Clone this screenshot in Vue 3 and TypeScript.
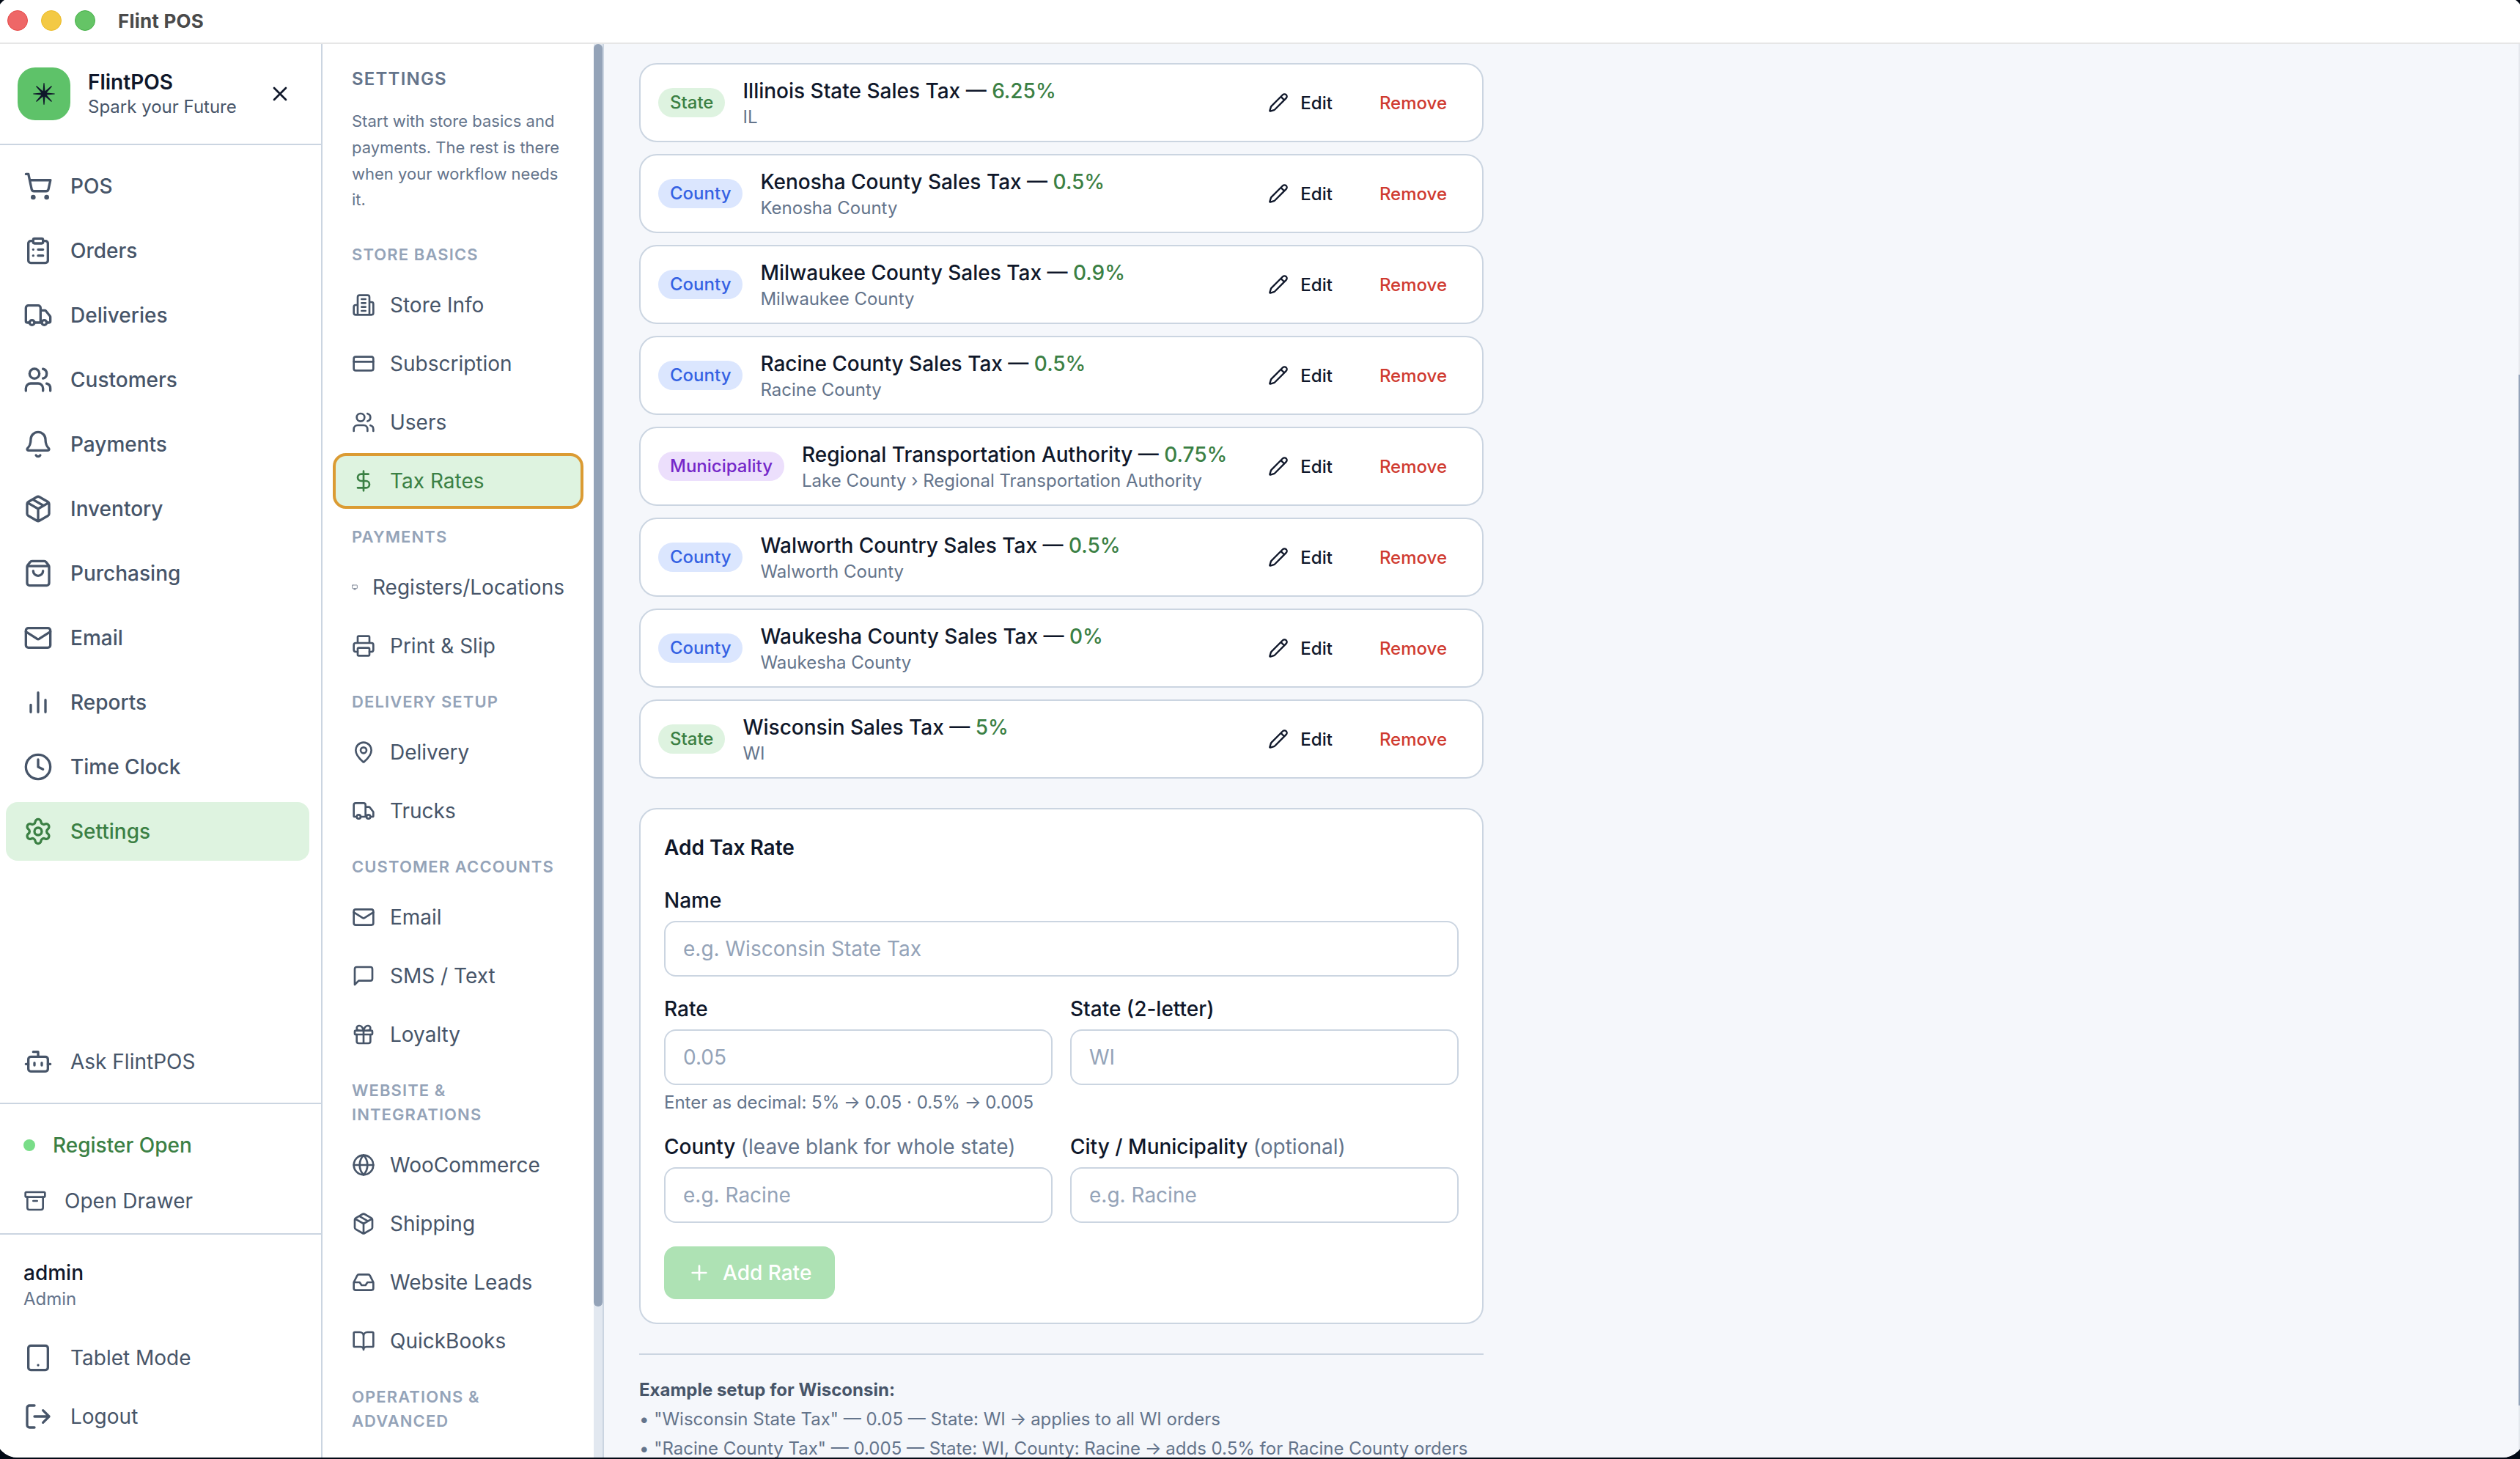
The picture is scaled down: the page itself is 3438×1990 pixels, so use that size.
<script setup lang="ts">
interface NavItem {
  label: string
  icon: string
  active?: boolean
  small?: boolean
}

interface NavGroup {
  title: string
  items: NavItem[]
}

interface TaxRate {
  level: 'State' | 'County' | 'Municipality'
  name: string
  rate: string
  region: string
}

const icons: Record<string, string> = {
  cart: '<circle cx="8" cy="21" r="1"/><circle cx="19" cy="21" r="1"/><path d="M2.05 2.05h2l2.66 12.42a2 2 0 0 0 2 1.58h9.78a2 2 0 0 0 1.95-1.57l1.65-7.43H5.12"/>',
  clipboard: '<rect width="8" height="4" x="8" y="2" rx="1"/><path d="M16 4h2a2 2 0 0 1 2 2v14a2 2 0 0 1-2 2H6a2 2 0 0 1-2-2V6a2 2 0 0 1 2-2h2M12 11h4M12 16h4M8 11h.01M8 16h.01"/>',
  truck: '<path d="M14 18V6a2 2 0 0 0-2-2H4a2 2 0 0 0-2 2v11a1 1 0 0 0 1 1h2M15 18H9M19 18h2a1 1 0 0 0 1-1v-3.65a1 1 0 0 0-.22-.624l-3.48-4.35A1 1 0 0 0 17.52 8H14"/><circle cx="17" cy="18" r="2"/><circle cx="7" cy="18" r="2"/>',
  users: '<path d="M16 21v-2a4 4 0 0 0-4-4H6a4 4 0 0 0-4 4v2M16 3.128a4 4 0 0 1 0 7.744M22 21v-2a4 4 0 0 0-3-3.87"/><circle cx="9" cy="7" r="4"/>',
  bell: '<path d="M10.268 21a2 2 0 0 0 3.464 0M3.262 15.326A1 1 0 0 0 4 17h16a1 1 0 0 0 .74-1.673C19.41 13.956 18 12.499 18 8A6 6 0 0 0 6 8c0 4.499-1.411 5.956-2.738 7.326"/>',
  package: '<path d="M11 21.73a2 2 0 0 0 2 0l7-4A2 2 0 0 0 21 16V8a2 2 0 0 0-1-1.73l-7-4a2 2 0 0 0-2 0l-7 4A2 2 0 0 0 3 8v8a2 2 0 0 0 1 1.73zM12 22V12M3.29 7 12 12l8.71-5M7.5 4.27l9 5.15"/>',
  bag: '<path d="M16 10a4 4 0 0 1-8 0M3.103 6.034h17.794M3.4 5.467a2 2 0 0 0-.4 1.2V20a2 2 0 0 0 2 2h14a2 2 0 0 0 2-2V6.667a2 2 0 0 0-.4-1.2l-2-2.667A2 2 0 0 0 17 2H7a2 2 0 0 0-1.6.8z"/>',
  mail: '<rect width="20" height="16" x="2" y="4" rx="2"/><path d="m22 7-8.991 5.727a2 2 0 0 1-2.009 0L2 7"/>',
  chart: '<path d="M18 20V10M12 20V4M6 20v-6"/>',
  clock: '<circle cx="12" cy="12" r="10"/><path d="M12 6v6l4 2"/>',
  gear: '<path d="M9.671 4.136a2.34 2.34 0 0 1 4.659 0 2.34 2.34 0 0 0 3.319 1.915 2.34 2.34 0 0 1 2.33 4.033 2.34 2.34 0 0 0 0 3.831 2.34 2.34 0 0 1-2.33 4.033 2.34 2.34 0 0 0-3.319 1.915 2.34 2.34 0 0 1-4.659 0 2.34 2.34 0 0 0-3.32-1.915 2.34 2.34 0 0 1-2.33-4.033 2.34 2.34 0 0 0 0-3.831A2.34 2.34 0 0 1 6.35 6.051a2.34 2.34 0 0 0 3.319-1.915"/><circle cx="12" cy="12" r="3"/>',
  bot: '<path d="M12 8V4H8M2 14h2M20 14h2M15 13v2M9 13v2"/><rect width="16" height="12" x="4" y="8" rx="2"/>',
  archive: '<rect width="20" height="5" x="2" y="3" rx="1"/><path d="M4 8v11a2 2 0 0 0 2 2h12a2 2 0 0 0 2-2V8M10 12h4"/>',
  tablet: '<rect width="16" height="20" x="4" y="2" rx="2"/><path d="M12 18h.01"/>',
  logout: '<path d="m16 17 5-5-5-5M21 12H9M9 21H5a2 2 0 0 1-2-2V5a2 2 0 0 1 2-2h4"/>',
  building: '<path d="M6 22V4a2 2 0 0 1 2-2h8a2 2 0 0 1 2 2v18ZM6 12H4a2 2 0 0 0-2 2v6a2 2 0 0 0 2 2h2M18 9h2a2 2 0 0 1 2 2v9a2 2 0 0 1-2 2h-2M10 6h4M10 10h4M10 14h4M10 18h4"/>',
  card: '<rect width="20" height="14" x="2" y="5" rx="2"/><path d="M2 10h20"/>',
  dollar: '<path d="M12 2v20M17 5H9.5a3.5 3.5 0 0 0 0 7h5a3.5 3.5 0 0 1 0 7H6"/>',
  monitor: '<rect width="20" height="14" x="2" y="3" rx="2"/><path d="M8 21h8M12 17v4"/>',
  printer: '<path d="M6 18H4a2 2 0 0 1-2-2v-5a2 2 0 0 1 2-2h16a2 2 0 0 1 2 2v5a2 2 0 0 1-2 2h-2M6 9V3a1 1 0 0 1 1-1h10a1 1 0 0 1 1 1v6"/><rect width="12" height="8" x="6" y="14" rx="1"/>',
  pin: '<path d="M20 10c0 4.993-5.539 10.193-7.399 11.799a1 1 0 0 1-1.202 0C9.539 20.193 4 14.993 4 10a8 8 0 0 1 16 0"/><circle cx="12" cy="10" r="3"/>',
  message: '<path d="M21 15a2 2 0 0 1-2 2H7l-4 4V5a2 2 0 0 1 2-2h14a2 2 0 0 1 2 2z"/>',
  gift: '<rect width="18" height="4" x="3" y="8" rx="1"/><path d="M12 8v13M19 12v7a2 2 0 0 1-2 2H7a2 2 0 0 1-2-2v-7M7.5 8a2.5 2.5 0 0 1 0-5A4.8 8 0 0 1 12 8a4.8 8 0 0 1 4.5-5 2.5 2.5 0 0 1 0 5"/>',
  globe: '<circle cx="12" cy="12" r="10"/><path d="M12 2a14.5 14.5 0 0 0 0 20 14.5 14.5 0 0 0 0-20M2 12h20"/>',
  inbox: '<path d="M22 12h-6l-2 3h-4l-2-3H2M5.45 5.11 2 12v6a2 2 0 0 0 2 2h16a2 2 0 0 0 2-2v-6l-3.45-6.89A2 2 0 0 0 16.76 4H7.24a2 2 0 0 0-1.79 1.11z"/>',
  book: '<path d="M12 7v14M3 18a1 1 0 0 1-1-1V4a1 1 0 0 1 1-1h5a4 4 0 0 1 4 4 4 4 0 0 1 4-4h5a1 1 0 0 1 1 1v13a1 1 0 0 1-1 1h-6a3 3 0 0 0-3 3 3 3 0 0 0-3-3z"/>',
  pencil: '<path d="M21.174 6.812a1 1 0 0 0-3.986-3.987L3.842 16.174a2 2 0 0 0-.5.83l-1.321 4.352a.5.5 0 0 0 .623.622l4.353-1.32a2 2 0 0 0 .83-.497zM15 5l4 4"/>',
  close: '<path d="M18 6 6 18M6 6l12 12"/>',
  plus: '<path d="M5 12h14M12 5v14"/>',
}

const mainNav: NavItem[] = [
  { label: 'POS', icon: 'cart' },
  { label: 'Orders', icon: 'clipboard' },
  { label: 'Deliveries', icon: 'truck' },
  { label: 'Customers', icon: 'users' },
  { label: 'Payments', icon: 'bell' },
  { label: 'Inventory', icon: 'package' },
  { label: 'Purchasing', icon: 'bag' },
  { label: 'Email', icon: 'mail' },
  { label: 'Reports', icon: 'chart' },
  { label: 'Time Clock', icon: 'clock' },
  { label: 'Settings', icon: 'gear', active: true },
]

const settingsGroups: NavGroup[] = [
  {
    title: 'Store Basics',
    items: [
      { label: 'Store Info', icon: 'building' },
      { label: 'Subscription', icon: 'card' },
      { label: 'Users', icon: 'users' },
      { label: 'Tax Rates', icon: 'dollar', active: true },
    ],
  },
  {
    title: 'Payments',
    items: [
      { label: 'Registers/Locations', icon: 'monitor', small: true },
      { label: 'Print & Slip', icon: 'printer' },
    ],
  },
  {
    title: 'Delivery Setup',
    items: [
      { label: 'Delivery', icon: 'pin' },
      { label: 'Trucks', icon: 'truck' },
    ],
  },
  {
    title: 'Customer Accounts',
    items: [
      { label: 'Email', icon: 'mail' },
      { label: 'SMS / Text', icon: 'message' },
      { label: 'Loyalty', icon: 'gift' },
    ],
  },
  {
    title: 'Website & Integrations',
    items: [
      { label: 'WooCommerce', icon: 'globe' },
      { label: 'Shipping', icon: 'package' },
      { label: 'Website Leads', icon: 'inbox' },
      { label: 'QuickBooks', icon: 'book' },
    ],
  },
  { title: 'Operations & Advanced', items: [] },
]

const taxRates: TaxRate[] = [
  { level: 'State', name: 'Illinois State Sales Tax', rate: '6.25%', region: 'IL' },
  { level: 'County', name: 'Kenosha County Sales Tax', rate: '0.5%', region: 'Kenosha County' },
  { level: 'County', name: 'Milwaukee County Sales Tax', rate: '0.9%', region: 'Milwaukee County' },
  { level: 'County', name: 'Racine County Sales Tax', rate: '0.5%', region: 'Racine County' },
  { level: 'Municipality', name: 'Regional Transportation Authority', rate: '0.75%', region: 'Lake County › Regional Transportation Authority' },
  { level: 'County', name: 'Walworth Country Sales Tax', rate: '0.5%', region: 'Walworth County' },
  { level: 'County', name: 'Waukesha County Sales Tax', rate: '0%', region: 'Waukesha County' },
  { level: 'State', name: 'Wisconsin Sales Tax', rate: '5%', region: 'WI' },
]
</script>

<template>
  <div class="desktop">
    <div class="window">
      <header class="titlebar">
        <span class="light red"></span>
        <span class="light yellow"></span>
        <span class="light green"></span>
        <span class="window-title">Flint POS</span>
      </header>

      <div class="body">
        <aside class="sidebar">
          <div class="brand">
            <div class="logo">
              <svg class="star" viewBox="-16 -16 32 32">
                <path d="M-.6-14.7H.6L1.5-3.7 10.1-10.9 10.9-10.1 3.7-1.5 14.7-.6V.6L3.7 1.5 10.9 10.1 10.1 10.9 1.5 3.7.6 14.7H-.6L-1.5 3.7-10.1 10.9-10.9 10.1-3.7 1.5-14.7.6V-.6L-3.7-1.5-10.9-10.1-10.1-10.9-1.5-3.7Z" />
              </svg>
            </div>
            <div class="brand-text">
              <div class="brand-name">FlintPOS</div>
              <div class="brand-tag">Spark your Future</div>
            </div>
            <svg class="icon i32" viewBox="0 0 24 24" v-html="icons.close"></svg>
          </div>

          <nav class="main-nav">
            <a v-for="item in mainNav" :key="item.label" class="nav-item" :class="{ active: item.active }">
              <svg class="icon i40" viewBox="0 0 24 24" v-html="icons[item.icon]"></svg>
              <span>{{ item.label }}</span>
            </a>
          </nav>

          <div class="ask">
            <a class="nav-item plain">
              <svg class="icon i40" viewBox="0 0 24 24" v-html="icons.bot"></svg>
              <span>Ask FlintPOS</span>
            </a>
          </div>

          <div class="register">
            <div class="register-state"><i class="dot"></i><span>Register Open</span></div>
            <div class="drawer">
              <svg class="icon i32" viewBox="0 0 24 24" v-html="icons.archive"></svg>
              <span>Open Drawer</span>
            </div>
          </div>

          <div class="account">
            <div class="user">
              <div class="user-name">admin</div>
              <div class="user-role">Admin</div>
            </div>
            <a class="nav-item plain">
              <svg class="icon i40" viewBox="0 0 24 24" v-html="icons.tablet"></svg>
              <span>Tablet Mode</span>
            </a>
            <a class="nav-item plain">
              <svg class="icon i40" viewBox="0 0 24 24" v-html="icons.logout"></svg>
              <span>Logout</span>
            </a>
          </div>
        </aside>

        <aside class="settings">
          <div class="settings-list">
            <h2>Settings</h2>
            <p class="intro">Start with store basics and payments. The rest is there when your workflow needs it.</p>
            <section v-for="group in settingsGroups" :key="group.title" class="group">
              <h3>{{ group.title }}</h3>
              <a v-for="item in group.items" :key="item.label" class="sub-item" :class="{ active: item.active }">
                <svg class="icon" :class="item.small ? 'i8' : 'i32'" viewBox="0 0 24 24" v-html="icons[item.icon]"></svg>
                <span>{{ item.label }}</span>
              </a>
            </section>
          </div>
          <div class="track"><div class="thumb"></div></div>
        </aside>

        <main class="content">
          <div class="page">
            <ul class="rates">
              <li v-for="tax in taxRates" :key="tax.name" class="rate">
                <span class="badge" :class="tax.level.toLowerCase()">{{ tax.level }}</span>
                <div class="rate-info">
                  <div class="rate-name">{{ tax.name }} — <span class="percent">{{ tax.rate }}</span></div>
                  <div class="rate-region">{{ tax.region }}</div>
                </div>
                <button class="ghost">
                  <svg class="icon i28" viewBox="0 0 24 24" v-html="icons.pencil"></svg>
                  <span>Edit</span>
                </button>
                <button class="ghost danger">Remove</button>
              </li>
            </ul>

            <form class="form" @submit.prevent>
              <h4>Add Tax Rate</h4>
              <label class="field">
                <span class="label">Name</span>
                <input placeholder="e.g. Wisconsin State Tax" />
              </label>
              <div class="columns">
                <label class="field">
                  <span class="label">Rate</span>
                  <input placeholder="0.05" />
                  <span class="help">Enter as decimal: 5% <b class="arrow">→</b> 0.05 · 0.5% <b class="arrow">→</b> 0.005</span>
                </label>
                <label class="field">
                  <span class="label">State (2-letter)</span>
                  <input placeholder="WI" />
                </label>
              </div>
              <div class="columns">
                <label class="field">
                  <span class="label">County <em>(leave blank for whole state)</em></span>
                  <input placeholder="e.g. Racine" />
                </label>
                <label class="field">
                  <span class="label">City / Municipality <em>(optional)</em></span>
                  <input placeholder="e.g. Racine" />
                </label>
              </div>
              <button class="add">
                <svg class="icon i32" viewBox="0 0 24 24" v-html="icons.plus"></svg>
                <span>Add Rate</span>
              </button>
            </form>

            <div class="example">
              <p class="example-title">Example setup for Wisconsin:</p>
              <p>• "Wisconsin State Tax" — 0.05 — State: WI <b class="arrow">→</b> applies to all WI orders</p>
              <p>• "Racine County Tax" — 0.005 — State: WI, County: Racine <b class="arrow">→</b> adds 0.5% for Racine County orders</p>
            </div>
          </div>
          <div class="page-track"><div class="page-thumb"></div></div>
        </main>
      </div>
    </div>
  </div>
</template>

<style>
body {
  margin: 0;
  background: #050d1c;
}
</style>

<style scoped>
* {
  box-sizing: border-box;
}

.desktop {
  width: 3438px;
  height: 1990px;
  overflow: hidden;
  background: #030a16;
  font-family: Inter, "Liberation Sans", sans-serif;
  font-size: 28px;
  line-height: 40px;
  color: #0f172a;
}

.window {
  display: flex;
  flex-direction: column;
  height: 1990px;
  padding-bottom: 2px;
  background: #fff;
  clip-path: inset(-6px -6px 2px -6px round 30px);
}

.titlebar {
  display: flex;
  flex: none;
  align-items: center;
  gap: 18px;
  height: 60px;
  padding: 0 0 2px 10px;
  border-bottom: 2px solid #e6e6e6;
}

.light {
  width: 28px;
  height: 28px;
  border: 1px solid;
  border-radius: 50%;
}

.light.red {
  background: #ee6767;
  border-color: #e64a48;
}

.light.yellow {
  background: #f3c944;
  border-color: #ecbb28;
}

.light.green {
  background: #65c466;
  border-color: #45b148;
}

.window-title {
  padding-top: 1px;
  margin-left: 13px;
  font-size: 26px;
  font-weight: 700;
  line-height: 32px;
  letter-spacing: 0.2px;
  color: #4a4a4a;
}

.body {
  display: flex;
  flex: 1;
  min-height: 0;
}

.icon {
  flex: none;
  fill: none;
  stroke: currentColor;
  stroke-width: 2;
  stroke-linecap: round;
  stroke-linejoin: round;
}

.i40 { width: 40px; height: 40px; }
.i32 { width: 32px; height: 32px; }
.i28 { width: 28px; height: 28px; }
.i8 { width: 8px; height: 8px; }

.sidebar {
  display: flex;
  flex: none;
  flex-direction: column;
  width: 440px;
  border-right: 2px solid #cbd5e1;
  background: #fff;
}

.brand {
  display: flex;
  flex: none;
  align-items: center;
  gap: 24px;
  height: 138px;
  padding: 0 40px 0 24px;
  border-bottom: 2px solid #cbd5e1;
}

.logo {
  display: flex;
  align-items: center;
  justify-content: center;
  width: 72px;
  height: 72px;
  border-radius: 24px;
  background: #5ec269;
}

.star {
  width: 32px;
  height: 32px;
  fill: #0f172a;
}

.brand-text {
  flex: 1;
}

.brand-name {
  font-weight: 600;
  line-height: 35px;
}

.brand-tag {
  font-size: 24px;
  line-height: 32px;
  color: #475569;
  white-space: nowrap;
}

.main-nav {
  display: flex;
  flex: 1;
  flex-direction: column;
  gap: 8px;
  padding: 16px 16px 0 8px;
}

.nav-item {
  display: flex;
  align-items: center;
  gap: 24px;
  height: 80px;
  padding: 0 24px;
  border-radius: 16px;
  font-weight: 500;
  color: #475569;
}

.nav-item.active {
  background: #def3e0;
  color: #3b8044;
}

.nav-item.plain {
  font-weight: 400;
}

.ask {
  padding: 0 8px 16px;
}

.register {
  padding: 16px 8px 8px;
  border-top: 2px solid #cbd5e1;
}

.register-state,
.drawer {
  display: flex;
  align-items: center;
  gap: 24px;
  padding: 0 24px;
}

.register-state {
  height: 80px;
  font-weight: 500;
  color: #3b8044;
}

.drawer {
  height: 72px;
  color: #475569;
}

.dot {
  width: 16px;
  height: 16px;
  border-radius: 50%;
  background: #79dd88;
}

.account {
  padding: 16px 8px;
  border-top: 2px solid #cbd5e1;
}

.user {
  padding: 16px 24px 24px;
}

.user-name {
  font-weight: 500;
}

.user-role {
  font-size: 24px;
  line-height: 32px;
  color: #64748b;
}

.settings {
  display: flex;
  flex: none;
  width: 384px;
  border-right: 2px solid #cbd5e1;
  background: #fff;
  overflow: hidden;
}

.settings-list {
  flex: 1;
  padding: 32px 16px 0;
}

h2,
h3,
h4,
p,
ul {
  margin: 0;
  padding: 0;
}

h2 {
  padding: 0 24px;
  font-size: 24px;
  font-weight: 600;
  line-height: 32px;
  letter-spacing: 1.2px;
  text-transform: uppercase;
  color: #64748b;
}

.intro {
  padding: 24px 24px 16px;
  font-size: 22px;
  line-height: 35.75px;
  color: #64748b;
}

.group {
  display: flex;
  flex-direction: column;
  gap: 8px;
  padding-top: 24px;
}

h3 {
  padding: 0 24px 8px;
  font-size: 22px;
  font-weight: 600;
  line-height: 33px;
  letter-spacing: 1.1px;
  text-transform: uppercase;
  color: #94a3b8;
}

.sub-item {
  display: flex;
  align-items: center;
  gap: 20px;
  height: 72px;
  padding: 0 24px;
  border-radius: 16px;
  color: #475569;
  white-space: nowrap;
}

.sub-item.active {
  background: #def3e0;
  color: #3b8044;
  outline: 4px solid #db9b33;
  outline-offset: -2px;
}

.track {
  flex: none;
  width: 12px;
  background: #e2e8f0;
}

.thumb {
  height: 1722px;
  border-radius: 6px;
  background: #94a3b8;
}

.content {
  display: flex;
  flex: 1;
  justify-content: space-between;
  overflow: hidden;
  background: #f5f7fb;
}

.page {
  width: 1152px;
  margin: 26px 0 0 48px;
}

.page-track {
  width: 2px;
  background: #e5e8ed;
}

.page-thumb {
  height: 1406px;
  margin-top: 451px;
  background: #94a3b8;
}

.rates {
  display: flex;
  flex-direction: column;
  gap: 16px;
  list-style: none;
}

.rate {
  display: flex;
  align-items: center;
  height: 108px;
  padding: 0 24px;
  border: 2px solid #cbd5e1;
  border-radius: 24px;
  background: #fff;
}

.badge {
  height: 40px;
  padding: 0 16px;
  border-radius: 20px;
  font-size: 24px;
  font-weight: 500;
}

.badge.state {
  background: #def3e0;
  color: #3b8044;
}

.badge.county {
  background: #dbe6fe;
  color: #3562e3;
}

.badge.municipality {
  background: #ecdffc;
  color: #7528c9;
}

.rate-info {
  flex: 1;
  padding-left: 24px;
}

.rate-name {
  font-weight: 500;
}

.percent {
  color: #3b8044;
}

.rate-region {
  font-size: 24px;
  line-height: 32px;
  color: #64748b;
}

button {
  display: flex;
  align-items: center;
  gap: 16px;
  border: 0;
  font-family: inherit;
  font-weight: 500;
}

.ghost {
  height: 64px;
  padding: 0 24px;
  background: none;
  font-size: 24px;
  color: #0f172a;
}

.danger {
  margin-left: 16px;
  color: #cf3a30;
}

.form {
  margin-top: 40px;
  padding: 32px;
  border: 2px solid #cbd5e1;
  border-radius: 24px;
  background: #fff;
}

h4 {
  margin-bottom: 32px;
  font-size: 28px;
  font-weight: 600;
}

.field {
  display: flex;
  flex: 1;
  flex-direction: column;
}

.label {
  margin-bottom: 8px;
  font-weight: 500;
}

.label em {
  font-style: normal;
  font-weight: 400;
  color: #64748b;
}

input {
  width: 100%;
  height: 76px;
  padding: 0 24px;
  border: 2px solid #cbd5e1;
  border-radius: 16px;
  background: #fff;
  font-family: inherit;
  font-size: 28px;
  outline: 0;
}

input::placeholder {
  color: #94a3b8;
  opacity: 1;
}

.help {
  margin-top: 8px;
  font-size: 24px;
  line-height: 32px;
  color: #64748b;
}

.arrow {
  margin: 0 -1px;
  font-weight: 400;
}

.columns {
  display: flex;
  gap: 24px;
  margin-top: 24px;
}

.add {
  height: 72px;
  margin-top: 32px;
  padding: 0 32px;
  border-radius: 16px;
  background: #aee2b4;
  font-size: 28px;
  color: #fff;
}

.example {
  display: flex;
  flex-direction: column;
  gap: 8px;
  margin-top: 40px;
  padding-top: 32px;
  border-top: 2px solid #cbd5e1;
  font-size: 24px;
  line-height: 32px;
  color: #64748b;
  white-space: nowrap;
}

.example-title {
  font-weight: 700;
  color: #475569;
}
</style>
